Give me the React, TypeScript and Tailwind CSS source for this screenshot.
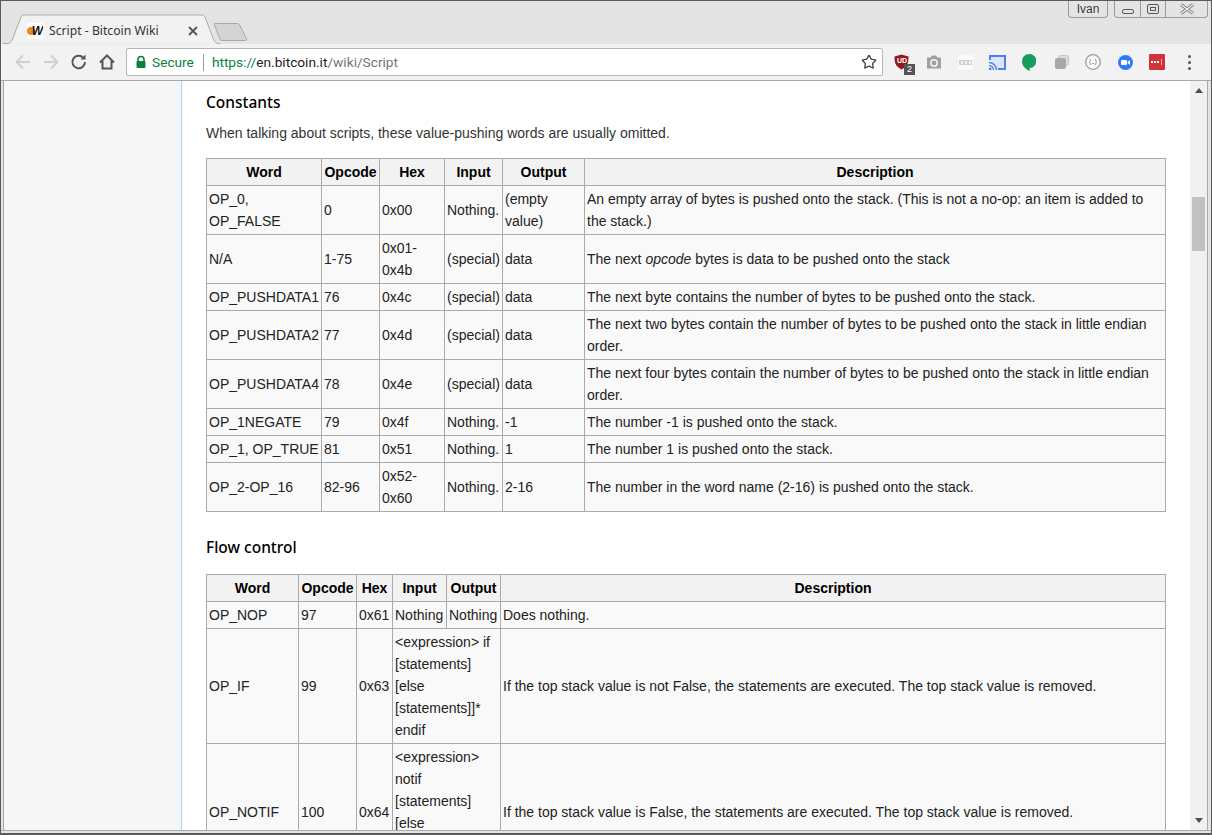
import React from "react";
import { Star } from "lucide-react";

type Row = { cells: React.ReactNode[]; h: string };

const thCls = "border border-[#aaaaaa] bg-[#f2f2f2] px-[2px] py-0 text-center font-bold text-black";
const tdCls = "border border-[#aaaaaa] px-[2px] py-0 align-middle";
const tableCls = "w-[959px] table-fixed border-collapse bg-[#f9f9f9] text-[14px] leading-[22px] text-[#222]";

const constantsCols = ["w-[115px]", "w-[58px]", "w-[65px]", "w-[58px]", "w-[82px]", "w-[581px]"];
const flowCols = ["w-[92px]", "w-[58px]", "w-[36px]", "w-[54px]", "w-[54px]", "w-[665px]"];

const constantsRows: Row[] = [
  { h: "h-[49px]", cells: ["OP_0, OP_FALSE", "0", "0x00", "Nothing.", "(empty value)", "An empty array of bytes is pushed onto the stack. (This is not a no-op: an item is added to the stack.)"] },
  { h: "h-[49px]", cells: ["N/A", "1-75", "0x01-0x4b", "(special)", "data", <>The next <i>opcode</i> bytes is data to be pushed onto the stack</>] },
  { h: "h-[27px]", cells: ["OP_PUSHDATA1", "76", "0x4c", "(special)", "data", "The next byte contains the number of bytes to be pushed onto the stack."] },
  { h: "h-[49px]", cells: ["OP_PUSHDATA2", "77", "0x4d", "(special)", "data", "The next two bytes contain the number of bytes to be pushed onto the stack in little endian order."] },
  { h: "h-[49px]", cells: ["OP_PUSHDATA4", "78", "0x4e", "(special)", "data", "The next four bytes contain the number of bytes to be pushed onto the stack in little endian order."] },
  { h: "h-[27px]", cells: ["OP_1NEGATE", "79", "0x4f", "Nothing.", "-1", "The number -1 is pushed onto the stack."] },
  { h: "h-[27px]", cells: ["OP_1, OP_TRUE", "81", "0x51", "Nothing.", "1", "The number 1 is pushed onto the stack."] },
  { h: "h-[49px]", cells: ["OP_2-OP_16", "82-96", "0x52-0x60", "Nothing.", "2-16", "The number in the word name (2-16) is pushed onto the stack."] },
];

const flowRows: Row[] = [
  { h: "h-[27px]", cells: ["OP_NOP", "97", "0x61", "Nothing", "Nothing", "Does nothing."] },
  { h: "h-[115px]", cells: ["OP_IF", "99", "0x63", "<expression> if [statements] [else [statements]]* endif", null, "If the top stack value is not False, the statements are executed. The top stack value is removed."] },
  { h: "h-[137px]", cells: ["OP_NOTIF", "100", "0x64", "<expression> notif [statements] [else [statements]]* endif", null, "If the top stack value is False, the statements are executed. The top stack value is removed."] },
];

const headers = ["Word", "Opcode", "Hex", "Input", "Output", "Description"];

const DataTable = ({ cols, rows }: { cols: string[]; rows: Row[] }) => (
  <table className={tableCls}>
    <colgroup>
      {cols.map((c, i) => (
        <col key={i} className={c} />
      ))}
    </colgroup>
    <thead>
      <tr className="h-[27px]">
        {headers.map((h) => (
          <th key={h} className={thCls}>{h}</th>
        ))}
      </tr>
    </thead>
    <tbody>
      {rows.map((row, i) => (
        <tr key={i} className={row.h}>
          {row.cells.map((cell, j) => {
            // null output cell: the input cell spans both columns
            if (cell === null) return null;
            const spans = j === 3 && row.cells[4] === null;
            return (
              <td key={j} className={tdCls} colSpan={spans ? 2 : 1}>
                {spans ? <div className="w-[100px]">{cell}</div> : cell}
              </td>
            );
          })}
        </tr>
      ))}
    </tbody>
  </table>
);

const Toolbar = () => (
  <div className="flex h-[37px] shrink-0 items-center border-b border-[#a9a9a9] bg-[#f2f2f2] pl-[12px]">
    {/* back / forward / reload / home */}
    <svg width="20" height="20" viewBox="0 0 20 20" className="mr-[8px]" fill="none" stroke="#d0d0d0" strokeWidth="2"><path d="M17 10H4M10 3.500 3.500 10l6.500 6.500" /></svg>
    <svg width="20" height="20" viewBox="0 0 20 20" className="mr-[8px]" fill="none" stroke="#d0d0d0" strokeWidth="2"><path d="M3 10h13M10 3.500l6.500 6.500-6.500 6.500" /></svg>
    <svg width="20" height="20" viewBox="0 0 20 20" className="mr-[8px]" fill="none" stroke="#555" strokeWidth="2"><path d="M16 10a6.300 6.300 0 1 1-1.800-4.400" /><path d="M16.500 2.500v5h-5" fill="#555" stroke="none" /></svg>
    <svg width="20" height="20" viewBox="0 0 20 20" className="mr-[9px]" fill="none" stroke="#555" strokeWidth="2"><path d="M3 10.500 10 3.500l7 7M5.500 9v7.500h9V9" /></svg>
    <div className="flex h-[28px] w-[757px] items-center rounded-[2px] border border-[#b5b5b5] bg-white text-[13.7px]">
      <svg width="12" height="14" viewBox="0 0 12 14" className="ml-[8px]"><path d="M3 6V4.500a3 3 0 0 1 6 0V6" fill="none" stroke="#0b8043" strokeWidth="1.600" /><rect x="1.500" y="6" width="9" height="7" rx="1" fill="#0b8043" /></svg>
      <span className="ml-[5px] font-['Roboto',sans-serif] text-[#0b8043]">Secure</span>
      <span className="ml-[9px] h-[17px] w-px bg-[#9a9a9a]" />
      <span className="ml-[8px] font-['Roboto',sans-serif]">
        <span className="text-[#0b8043]">https://</span>
        <span className="text-[#222]">en.bitcoin.it</span>
        <span className="text-[#757575]">/wiki/Script</span>
      </span>
      <Star className="ml-auto mr-[5px] h-[16px] w-[16px] text-[#444]" strokeWidth={2} />
    </div>
    {/* extension icons */}
    <div className="relative ml-[11px] h-[20px] w-[16px]">
      <svg width="15" height="16" viewBox="0 0 15 16" className="absolute left-0 top-[2px]"><path d="M7.500 0.500 14.500 2.500c0 6-1 10-7 13C1.500 12.500 0.500 8.500 0.500 2.500z" fill="#8e1a1f" /></svg>
      <span className="absolute left-[3px] top-[5px] text-[7px] font-bold leading-[8px] text-white">UD</span>
      <span className="absolute left-[10px] top-[12px] flex h-[11px] w-[11px] items-center justify-center bg-[#555] text-[9px] leading-none text-white">2</span>
    </div>
    <svg width="16" height="14" viewBox="0 0 16 14" className="ml-[16px]"><path d="M1 2.500h3.500L6 .5h4l1.500 2H15v11H1z" fill="#a0a0a0" /><circle cx="8" cy="8" r="3.200" fill="#a0a0a0" stroke="#f2f2f2" strokeWidth="1.500" /></svg>
    <svg width="15" height="15" viewBox="0 0 15 15" className="ml-[16px]"><rect x="0" y="0" width="15" height="15" fill="#fafafa" /><rect x="1" y="5" width="13" height="5" fill="#d0d0d0" /><rect x="3" y="6" width="2" height="3" fill="#f4f4f4" /><rect x="7" y="6" width="2" height="3" fill="#f4f4f4" /><rect x="11" y="6" width="2" height="3" fill="#f4f4f4" /></svg>
    <svg width="17" height="15" viewBox="0 0 17 15" className="ml-[16px]"><path d="M1 5V1h15v13H9" fill="#dbe6fc" stroke="#4a80f0" strokeWidth="2" /><path d="M0 7.500a7.500 7.500 0 0 1 7.500 7.500M0 10.500a4.500 4.500 0 0 1 4.500 4.500" fill="none" stroke="#4a80f0" strokeWidth="1.500" /><circle cx="1.200" cy="13.800" r="1.400" fill="#4a80f0" /></svg>
    <svg width="14" height="17" viewBox="0 0 14 17" className="ml-[16px]"><path d="M7 0a7 7 0 0 1 .7 14v3C7 16.600 0 14 0 7a7 7 0 0 1 7-7z" fill="#189d5f" /></svg>
    <svg width="14" height="14" viewBox="0 0 14 14" className="ml-[19px]"><rect x="3.500" y="0.500" width="10" height="10" rx="2" fill="#dcdcdc" stroke="#c4c4c4" /><rect x="0" y="3" width="11" height="11" rx="2.500" fill="#a8a8a8" /></svg>
    <svg width="16" height="16" viewBox="0 0 16 16" className="ml-[16px]"><circle cx="8" cy="8" r="7.300" fill="#fafafa" stroke="#9a9a9a" strokeWidth="1.300" /><path d="M6 5C4.800 5 5.500 8 4.500 8c1 0 .3 3 1.500 3M10 5c1.200 0 .5 3 1.500 3-1 0-.3 3-1.500 3M7.200 9.500h1.600" fill="none" stroke="#888" /></svg>
    <svg width="15" height="15" viewBox="0 0 15 15" className="ml-[17px]"><circle cx="7.500" cy="7.500" r="7.500" fill="#2d7cf6" /><rect x="3" y="5" width="6" height="5" rx="1" fill="#fff" /><path d="M9.500 7 12 5v5L9.500 8z" fill="#fff" /></svg>
    <svg width="16" height="16" viewBox="0 0 16 16" className="ml-[16px]"><rect width="16" height="16" rx="1" fill="#d1333a" /><rect x="2" y="7" width="2" height="2" fill="#fff" /><rect x="5" y="7" width="2" height="2" fill="#fff" /><rect x="8" y="7" width="2" height="2" fill="#fff" /><rect x="12" y="5" width="1" height="6" fill="#eba5a8" /></svg>
    <div className="ml-[23px] flex flex-col gap-[3px]">
      <span className="h-[3px] w-[3px] rounded-full bg-[#555]" />
      <span className="h-[3px] w-[3px] rounded-full bg-[#555]" />
      <span className="h-[3px] w-[3px] rounded-full bg-[#555]" />
    </div>
  </div>
);

const TabStrip = () => (
  <div className="relative flex h-[43px] shrink-0 items-end bg-[#e4e4e4] pl-[26px]">
    <svg className="absolute left-[2px] top-[13px]" width="217" height="30" viewBox="0 0 217 30">
      <path d="M0 29.500h6l3-3L18 3c.7-1.500 1.700-2 3-2h178c1.300 0 2.300.5 3 2l9 23.500 3 3h3" fill="#f2f2f2" stroke="#a9a9a9" />
    </svg>
    <div className="relative z-10 flex h-[26px] w-[171px] items-center font-['Noto_Sans',sans-serif] text-[12.2px] text-[#333]">
      <span className="relative flex h-[16px] w-[16px] items-center justify-end overflow-hidden bg-white font-['Liberation_Sans',sans-serif] text-[12px] font-bold italic leading-none text-[#111]">
        <span className="absolute left-0 top-[4px] h-[8px] w-[8px] rounded-full bg-[#e98a1f]" />
        <span className="relative">W</span>
      </span>
      <span className="ml-[6px]">Script - Bitcoin Wiki</span>
      <svg width="10" height="10" viewBox="0 0 10 10" className="ml-auto"><path d="M1 1l8 8M9 1 1 9" stroke="#555" strokeWidth="1.800" /></svg>
    </div>
    <svg className="absolute left-[212px] top-[21px]" width="36" height="20" viewBox="0 0 36 20">
      <path d="M1.500 1.500h23c1 0 1.500.3 2 1l7 14c.5 1 0 2-1 2H9c-1 0-1.500-.3-2-1L1.500 3c-.5-1 0-1.500 0-1.500z" fill="#d4d4d4" stroke="#a9a9a9" />
    </svg>
    {/* user chip and window buttons */}
    <div className="absolute left-[1067px] top-0 flex h-[17px] w-[40px] items-center justify-center rounded-b-[4px] border border-t-0 border-[#9a9a9a] text-[12px] text-[#333] [text-shadow:0_0_2px_white]">Ivan</div>
    <div className="absolute left-[1113px] top-0 flex h-[17px] w-[94px] rounded-b-[4px] border border-t-0 border-[#9a9a9a]">
      <div className="flex w-[25px] items-center justify-center pt-[5px]"><span className="h-[5px] w-[12px] rounded-[2px] border border-[#555]" /></div>
      <div className="flex w-[26px] items-center justify-center border-x border-[#9a9a9a]"><span className="flex h-[10px] w-[12px] items-center justify-center rounded-[2px] border border-[#555]"><span className="h-[4px] w-[6px] border border-[#555]" /></span></div>
      <div className="flex flex-1 items-center justify-center">
        <svg width="18" height="12" viewBox="0 0 18 12"><path d="M3 1.500l12 9M15 1.500l-12 9" stroke="#777" strokeWidth="3" /><path d="M3 1.500l12 9M15 1.500l-12 9" stroke="#f0f0f0" strokeWidth="1.400" /></svg>
      </div>
    </div>
  </div>
);

const Scrollbar = () => (
  <div className="flex w-[17px] flex-col items-center bg-[#f1f1f1]">
    <svg width="8" height="5" viewBox="0 0 8 5" className="mt-[7px]"><path d="M4 0l4 5H0z" fill="#505050" /></svg>
    <div className="mt-[104px] h-[54px] w-[13px] bg-[#c1c1c1]" />
    <svg width="8" height="5" viewBox="0 0 8 5" className="mb-[7px] mt-auto"><path d="M4 5l4-5H0z" fill="#505050" /></svg>
  </div>
);

export default function App() {
  return (
    <div className="flex h-[835px] w-[1212px] flex-col overflow-hidden border-x border-t border-b-2 border-[#5a5a5a] bg-[#e4e4e4] font-['Liberation_Sans',Arial,sans-serif]">
      <TabStrip />
      <Toolbar />
      <div className="flex min-h-0 flex-1 pl-[2px] pr-[3px]">
        <aside className="w-[179px] shrink-0 border-x border-l-[#a9a9a9] border-r-[#a7d7f9] bg-[#f6f6f6]" />
        <main className="min-w-0 flex-1 overflow-hidden bg-white pl-[24px]">
          <h2 className="mt-[10px] font-['Noto_Sans',sans-serif] text-[15.5px] font-medium leading-[22px] text-black">Constants</h2>
          <p className="mb-[14px] mt-[9px] text-[14px] leading-[22px] text-[#333]">When talking about scripts, these value-pushing words are usually omitted.</p>
          <DataTable cols={constantsCols} rows={constantsRows} />
          <h2 className="mb-[16px] mt-[24px] font-['Noto_Sans',sans-serif] text-[15.5px] font-medium leading-[22px] text-black">Flow control</h2>
          <DataTable cols={flowCols} rows={flowRows} />
        </main>
        <div className="flex border-r border-[#a9a9a9]">
          <Scrollbar />
        </div>
      </div>
      <div className="h-[3px] shrink-0 border-t border-[#a9a9a9] bg-[#e4e4e4]" />
    </div>
  );
}
